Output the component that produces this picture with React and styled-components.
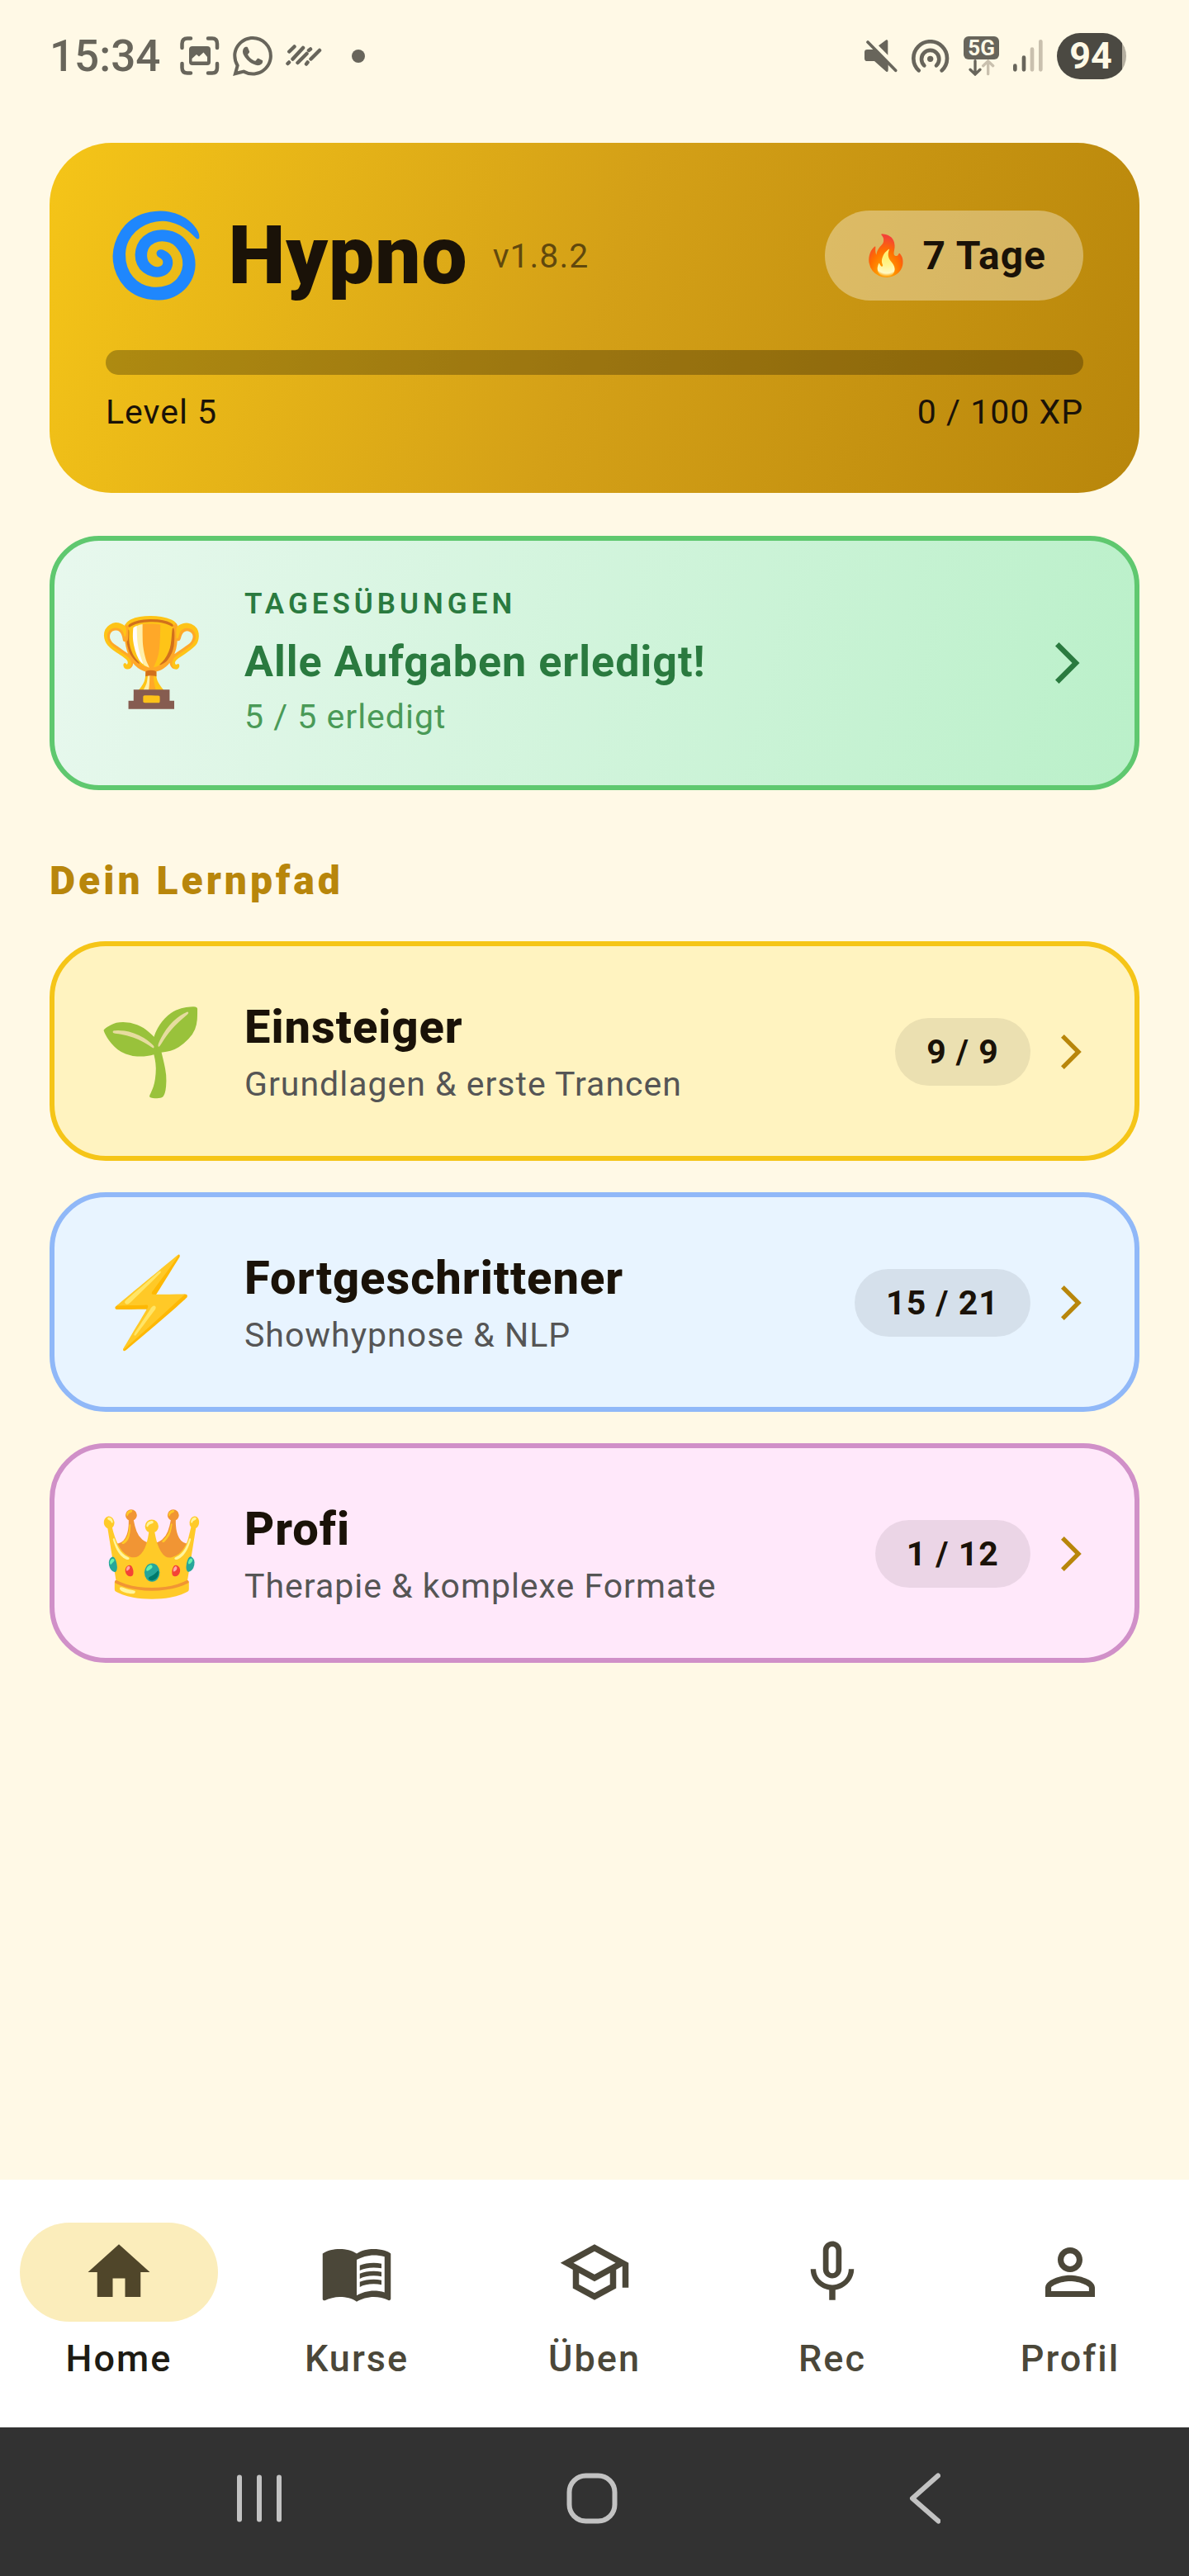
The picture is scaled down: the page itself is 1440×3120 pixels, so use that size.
import styled, { createGlobalStyle } from "styled-components";
import { MdHome, MdMenuBook, MdOutlineSchool, MdMicNone, MdPersonOutline } from "react-icons/md";
import { SiWhatsapp } from "react-icons/si";

const levels = [
  { emoji: "🌱", title: "Einsteiger", sub: "Grundlagen & erste Trancen", done: 9, total: 9, bg: "#fff3c0", border: "#f5c518" },
  { emoji: "⚡", title: "Fortgeschrittener", sub: "Showhypnose & NLP", done: 15, total: 21, bg: "#e8f4ff", border: "#90b8f8" },
  { emoji: "👑", title: "Profi", sub: "Therapie & komplexe Formate", done: 1, total: 12, bg: "#ffe8fa", border: "#d090c8" },
];

const tabs = [
  { label: "Home", Icon: MdHome, active: true },
  { label: "Kurse", Icon: MdMenuBook },
  { label: "Üben", Icon: MdOutlineSchool },
  { label: "Rec", Icon: MdMicNone },
  { label: "Profil", Icon: MdPersonOutline },
];

export default function App() {
  return (
    <Page>
      <GlobalStyle />
      <StatusBar />

      <Main>
        <HeroCard>
          <HeroTop>
            <Title>🌀 Hypno</Title>
            <Version>v1.8.2</Version>
            <Streak>🔥 7 Tage</Streak>
          </HeroTop>
          <Progress role="progressbar" aria-label="XP" aria-valuenow={0} aria-valuemin={0} aria-valuemax={100} />
          <HeroBottom>
            <span>Level 5</span>
            <span>0 / 100 XP</span>
          </HeroBottom>
        </HeroCard>

        <DailyCard type="button">
          <Emoji>🏆</Emoji>
          <CardText>
            <DailyLabel>TAGESÜBUNGEN</DailyLabel>
            <DailyTitle>Alle Aufgaben erledigt!</DailyTitle>
            <DailySub>5 / 5 erledigt</DailySub>
          </CardText>
          <Chevron color="#2a7a3f" height={50} />
        </DailyCard>

        <SectionTitle>Dein Lernpfad</SectionTitle>
        <LevelList>
          {levels.map((level) => (
            <LevelCard key={level.title} type="button" $bg={level.bg} $border={level.border}>
              <Emoji>{level.emoji}</Emoji>
              <CardText>
                <LevelTitle>{level.title}</LevelTitle>
                <LevelSub>{level.sub}</LevelSub>
              </CardText>
              <Badge>
                {level.done} / {level.total}
              </Badge>
              <Chevron color="#b8860b" height={42} />
            </LevelCard>
          ))}
        </LevelList>
      </Main>

      <TabBar>
        {tabs.map(({ label, Icon, active }) => (
          <Tab key={label} href={`#${label}`} $active={active} aria-current={active ? "page" : undefined}>
            <TabIcon $active={active}>
              <Icon size={90} />
            </TabIcon>
            {label}
          </Tab>
        ))}
      </TabBar>

      <SystemBar>
        <SystemButton type="button" aria-label="Letzte Apps">
          <svg width="62" height="62" viewBox="0 0 62 62" stroke="#c2c2c2" strokeWidth="6" strokeLinecap="round">
            <path d="M7 5.500V56.500M31 5.500V56.500M55 5.500V56.500" />
          </svg>
        </SystemButton>
        <SystemButton type="button" aria-label="Startbildschirm">
          <svg width="62" height="62" viewBox="0 0 62 62" fill="none" stroke="#c2c2c2" strokeWidth="6">
            <rect x="3.500" y="3.500" width="55" height="55" rx="20" />
          </svg>
        </SystemButton>
        <SystemButton type="button" aria-label="Zurück">
          <svg width="38" height="62" viewBox="0 0 38 62" fill="none" stroke="#c2c2c2" strokeWidth="6" strokeLinecap="round" strokeLinejoin="round">
            <path d="M35 3.500L4 31L35.500 58.500" />
          </svg>
        </SystemButton>
      </SystemBar>
    </Page>
  );
}

function Chevron({ color, height }) {
  return (
    <ChevronSvg height={height} viewBox="0 0 30 50" fill={color} aria-hidden="true">
      <path d="M4.500 0L0 4.500L20.500 25L0 45.500L4.500 50L29.500 25Z" />
    </ChevronSvg>
  );
}

function StatusBar() {
  return (
    <Status>
      <Time>15:34</Time>
      <LeftIcons>
        <svg width="48" height="48" viewBox="0 0 48 48">
          <path
            d="M2.500 14V9Q2.500 2.500 9 2.500H13M34 2.500H39Q45 2.500 45 9V14M45 33V38Q45 44.500 39 44.500H34M13 44.500H9Q2.500 44.500 2.500 38V33"
            fill="none"
            stroke="#68655b"
            strokeWidth="4.500"
            strokeLinecap="round"
          />
          <rect x="11" y="12" width="26" height="23" rx="4" fill="#68655b" />
          <path d="M14.500 30.500V27L20 22L23 24.500L28.500 19.500L33 25V30.500Z" fill="#fff9e6" />
        </svg>
        <SiWhatsapp size={48} />
        <svg width="44" height="28" viewBox="0 0 44 28" stroke="#68655b" strokeWidth="4.500" strokeLinecap="round">
          <path d="M4.300 8.500L10.500 2.500M8.500 17.500L21 4M2.500 23L4 21.500M14.500 22L25.500 11M28 7L30 5.500M30.500 17.500L41 7M25 23.500L26.500 21.500" />
        </svg>
        <Dot />
      </LeftIcons>

      <RightIcons>
        <svg width="40" height="40" viewBox="0 0 120 120" fill="#68655b">
          <path d="M51 22L79 1Q85-1 85 6V56Z" />
          <path d="M10 36H33L86 90V110Q86 119 79 116L36 78H10Q0 78 0 68V46Q0 36 10 36Z" />
          <path d="M12 9L113 112" stroke="#68655b" strokeWidth="11" strokeLinecap="round" />
        </svg>
        <svg width="46" height="40" viewBox="0 0 138 120" fill="none" stroke="#68655b" strokeWidth="14" strokeLinecap="round">
          <path d="M26 112A61 61 0 1 1 110 112" />
          <path d="M46 94A32 32 0 1 1 90 94" />
          <circle cx="68" cy="70" r="11" fill="#68655b" stroke="none" />
        </svg>
        <Network>
          <NetworkLabel>5G</NetworkLabel>
          <svg width="42" height="20" viewBox="0 0 126 60" fill="none" strokeWidth="10" strokeLinecap="round">
            <path d="M39 5V53M21 37L39 54L57 37" stroke="#68655b" />
            <path d="M86 53V8M68 23L86 6L104 23" stroke="#c9c0ae" />
          </svg>
        </Network>
        <svg width="36" height="40" viewBox="0 0 108 120" strokeWidth="14" strokeLinecap="round">
          <path d="M7 95V109M39 65V109" stroke="#68655b" />
          <path d="M69 35V109M100 7V109" stroke="#c9c0ae" />
        </svg>
        <Battery>94</Battery>
      </RightIcons>
    </Status>
  );
}

const GlobalStyle = createGlobalStyle`
  * {
    box-sizing: border-box;
  }

  body {
    margin: 0;
    background: #fff9e6;
    font-family: Roboto, "Noto Color Emoji", sans-serif;
    color: #1a1208;
  }

  button {
    font: inherit;
    color: inherit;
    cursor: pointer;
  }

  svg {
    flex-shrink: 0;
  }
`;

const Page = styled.div`
  display: flex;
  flex-direction: column;
  min-height: 100vh;
`;

const Status = styled.header`
  display: flex;
  align-items: center;
  height: 136px;
  padding: 0 76px 0 60px;
  color: #68655b;
`;

const Time = styled.span`
  font-size: 53px;
  font-weight: 500;
`;

const LeftIcons = styled.div`
  display: flex;
  align-items: center;
  gap: 16px;
  margin-left: 24px;
`;

const Dot = styled.span`
  width: 16px;
  height: 16px;
  margin-left: 20px;
  border-radius: 50%;
  background: #68655b;
`;

const RightIcons = styled.div`
  display: flex;
  align-items: center;
  gap: 17px;
  margin-left: auto;
`;

const Network = styled.div`
  display: flex;
  flex-direction: column;
  align-items: center;
`;

const NetworkLabel = styled.span`
  padding: 0 5px;
  border-radius: 6px;
  background: #68655b;
  color: #fff9e6;
  font-size: 26px;
  font-weight: 700;
  line-height: 28px;
`;

const Battery = styled.span`
  width: 84px;
  padding-right: 2px;
  border-radius: 28px;
  background: linear-gradient(to right, #4b4942 94%, #b5afa0 94%);
  color: #fff9e6;
  font-size: 45px;
  font-weight: 700;
  line-height: 56px;
  text-align: center;
`;

const Main = styled.main`
  flex: 1;
  padding: 37px 60px;
`;

const HeroCard = styled.section`
  padding: 68px;
  border-radius: 75px;
  background: linear-gradient(108deg, #f5c518, #d4a017 50%, #b8860b);
`;

const HeroTop = styled.div`
  display: flex;
  align-items: center;
  height: 137px;
`;

const Title = styled.h1`
  margin: 0;
  font-size: 98px;
  font-weight: 900;
  line-height: 137px;
  letter-spacing: 1px;
`;

const Version = styled.span`
  margin-left: 30px;
  color: rgba(26, 18, 8, 0.65);
  font-size: 41px;
  letter-spacing: 1px;
`;

const Streak = styled.span`
  margin-left: auto;
  padding: 20px 45px;
  border-radius: 55px;
  background: rgba(255, 255, 255, 0.35);
  font-size: 48px;
  font-weight: 700;
  line-height: 69px;
  letter-spacing: 1px;
`;

const Progress = styled.div`
  height: 30px;
  margin: 46px 0 16px;
  border-radius: 15px;
  background: rgba(0, 0, 0, 0.27);
`;

const HeroBottom = styled.div`
  display: flex;
  justify-content: space-between;
  font-size: 41px;
  line-height: 59px;
  letter-spacing: 1px;
`;

const Card = styled.button`
  display: flex;
  align-items: center;
  width: 100%;
  border: 6px solid;
  text-align: left;
`;

const DailyCard = styled(Card)`
  margin-top: 52px;
  padding: 53px 66px 53px 53px;
  border-color: #5fc86f;
  border-radius: 60px;
  background: linear-gradient(103deg, #e8f8ee, #baf0c9) border-box;
`;

const LevelCard = styled(Card)`
  padding: 58px 64px 57px 53px;
  border-color: ${({ $border }) => $border};
  border-radius: 68px;
  background: ${({ $bg }) => $bg};
`;

const Emoji = styled.span`
  width: 177px;
  font-size: 104px;
  line-height: 124px;
`;

const CardText = styled.span`
  display: flex;
  flex: 1;
  flex-direction: column;
`;

const DailyLabel = styled.span`
  margin-bottom: 8px;
  color: #2a7a3f;
  font-size: 35px;
  font-weight: 600;
  line-height: 48px;
  letter-spacing: 5px;
`;

const DailyTitle = styled.span`
  color: #2a7a3f;
  font-size: 52px;
  font-weight: 700;
  line-height: 75px;
  letter-spacing: 1px;
`;

const DailySub = styled.span`
  color: #4a9a57;
  font-size: 41px;
  line-height: 59px;
  letter-spacing: 1px;
`;

const SectionTitle = styled.h2`
  margin: 75px 0 39px;
  color: #b8860b;
  font-size: 48px;
  font-weight: 900;
  line-height: 69px;
  letter-spacing: 4px;
`;

const LevelList = styled.div`
  display: flex;
  flex-direction: column;
  gap: 38px;
`;

const LevelTitle = styled.span`
  font-size: 56px;
  font-weight: 800;
  line-height: 80px;
  letter-spacing: 1px;
`;

const LevelSub = styled.span`
  color: #555;
  font-size: 41px;
  line-height: 59px;
  letter-spacing: 1px;
`;

const Badge = styled.span`
  margin-right: 37px;
  padding: 12px 38px;
  border-radius: 42px;
  background: rgba(0, 0, 0, 0.08);
  font-size: 41px;
  font-weight: 700;
  line-height: 58px;
  letter-spacing: 1px;
`;

const ChevronSvg = styled.svg`
  display: block;
`;

const TabBar = styled.nav`
  display: grid;
  grid-template-columns: repeat(5, 1fr);
  padding: 52px 0 53px;
  background: #fff;
`;

const Tab = styled.a`
  display: flex;
  flex-direction: column;
  align-items: center;
  gap: 15px;
  color: ${({ $active }) => ($active ? "#1d1b13" : "#4b4739")};
  font-size: 45px;
  font-weight: 500;
  line-height: 60px;
  letter-spacing: 2px;
  text-decoration: none;
`;

const TabIcon = styled.span`
  display: flex;
  align-items: center;
  justify-content: center;
  width: 240px;
  height: 120px;
  border-radius: 60px;
  background: ${({ $active }) => ($active ? "#fbedbb" : "transparent")};
  color: ${({ $active }) => ($active ? "#50462a" : "#4b4739")};
`;

const SystemBar = styled.footer`
  display: grid;
  grid-template-columns: repeat(3, 1fr);
  height: 180px;
  padding: 0 118px 8px 112px;
  background: #323232;
`;

const SystemButton = styled.button`
  display: flex;
  align-items: center;
  justify-content: center;
  border: none;
  background: none;
`;
